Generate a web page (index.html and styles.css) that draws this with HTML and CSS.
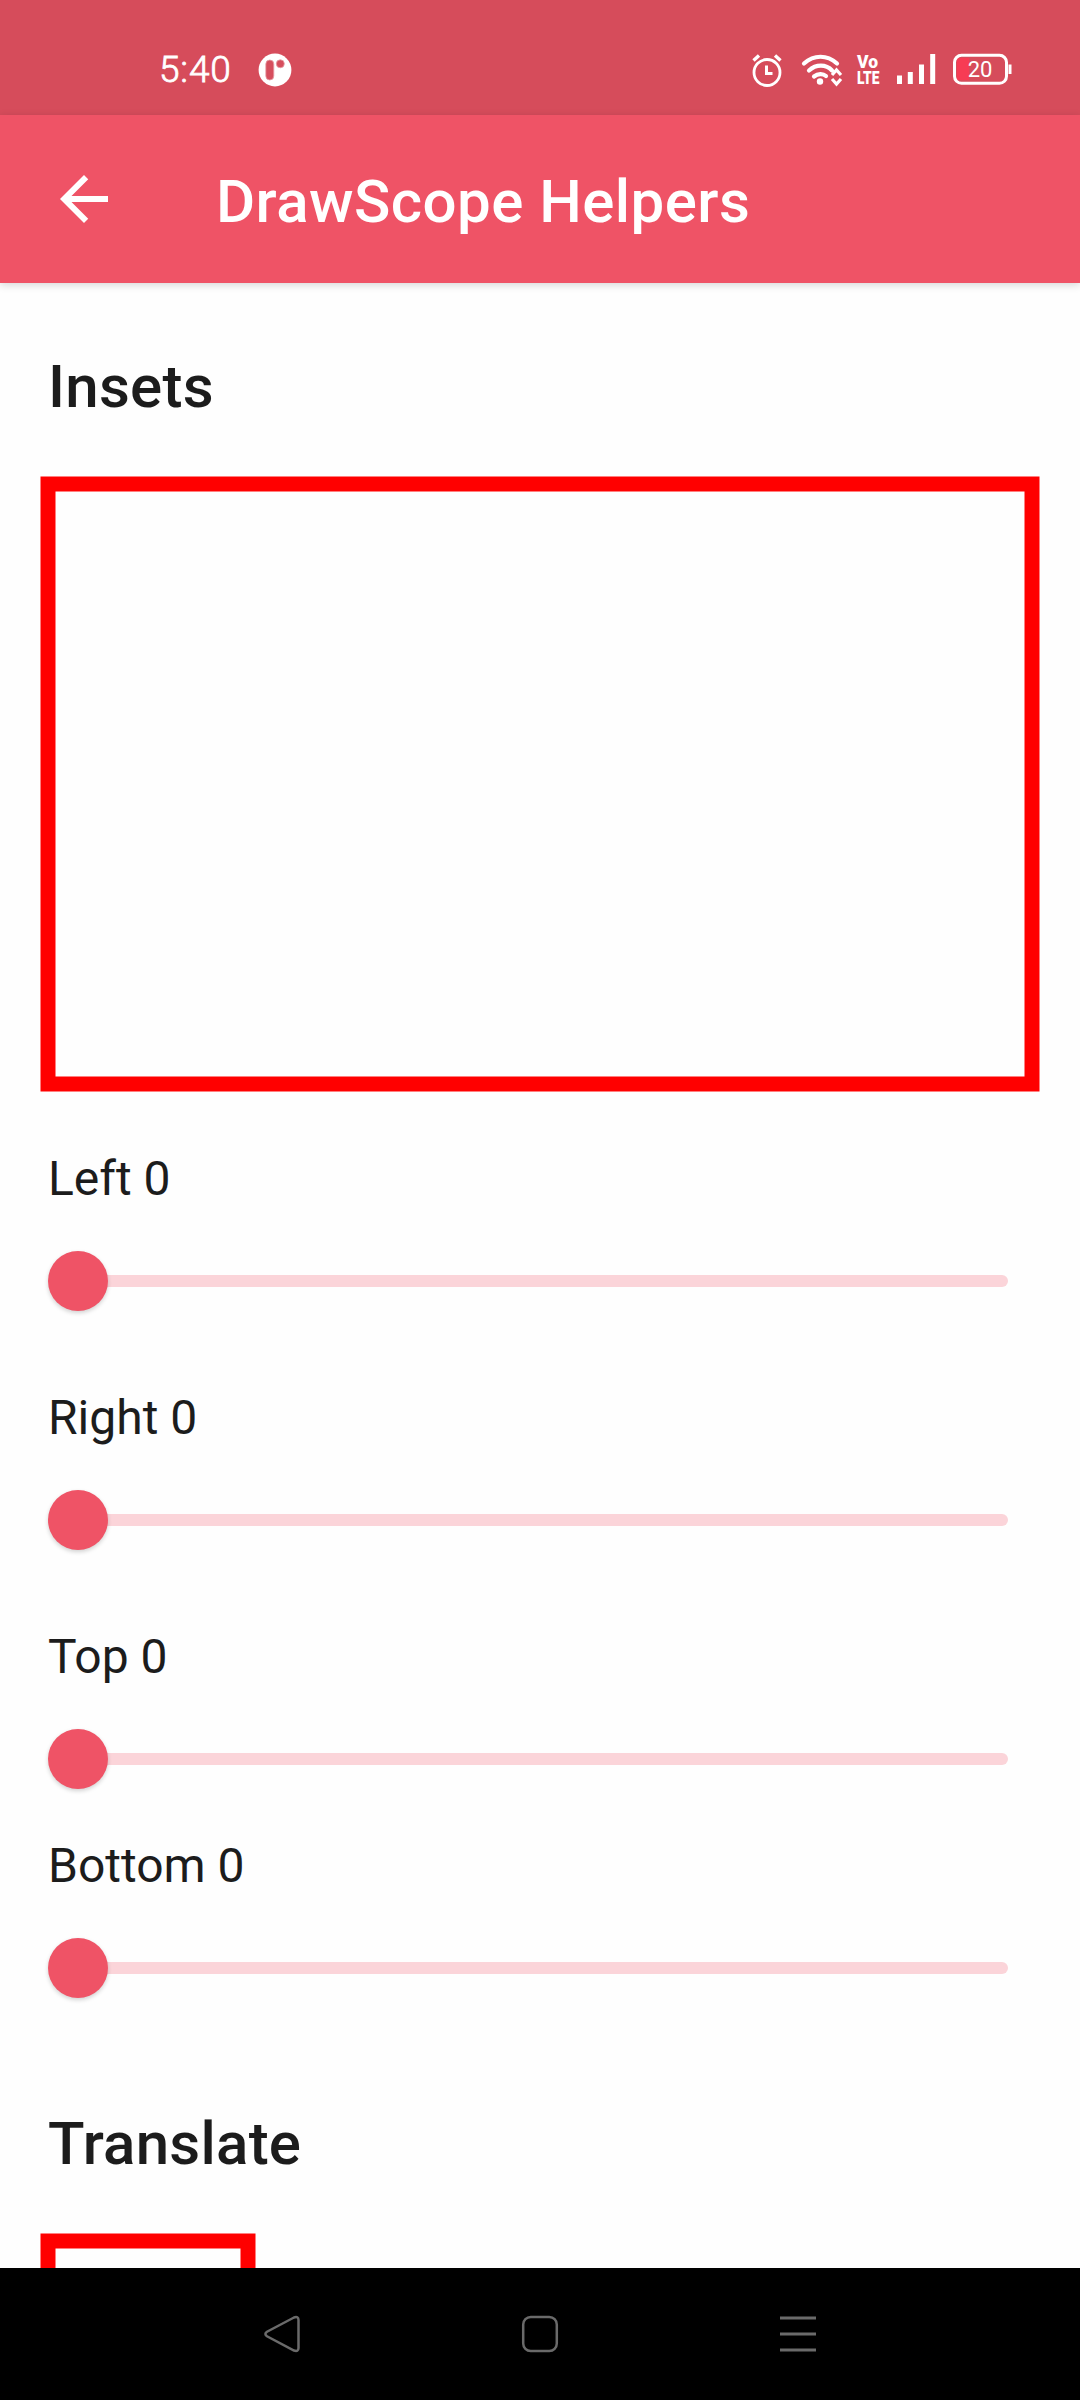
FILE: index.html
```
<!DOCTYPE html>
<html lang="en">
<head>
<meta charset="utf-8">
<title>DrawScope Helpers</title>
<link rel="stylesheet" href="styles.css">
</head>
<body>
<div class="screen">
  <header class="status-bar">
    <span class="clock">5:40</span>
    <svg class="notification" width="34" height="34" viewBox="0 0 34 34">
      <circle cx="17" cy="17" r="16.4" fill="#fff"/>
      <rect x="7.8" y="7" width="8" height="20" rx="4" fill="#d64e5d" stroke="#e9a0a8" stroke-width=".8"/>
      <circle cx="22.3" cy="10.8" r="4" fill="#d64e5d" stroke="#e9a0a8" stroke-width=".8"/>
    </svg>
    <div class="indicators">
      <svg width="280" height="40" viewBox="0 0 280 40" fill="none" stroke="#fff">
        <g stroke-width="2.8">
          <circle cx="17" cy="22.5" r="13"/>
          <path d="M3.5 10.5 9 5.5M30.5 10.5 25 5.5" stroke-width="3.4"/>
          <path d="M16.5 15.5V23.5H22.5" stroke-width="3"/>
        </g>
        <g stroke-width="4.2" stroke-linecap="round">
          <path d="M54 13.5C64 4.5 77 4.5 87 13.5M59 20.5C66 14 76 14 82 20.5M64 26.5C68 23.3 73 23.3 76 26"/>
        </g>
        <circle cx="70" cy="31.5" r="3.2" fill="#fff" stroke="none"/>
        <path d="M82 25 86.5 20 91 25M82 29 86.5 34 91 29" stroke-width="3.2"/>
        <g class="volte" fill="#fff" stroke="none">
          <text x="107" y="18" textLength="21" lengthAdjust="spacingAndGlyphs">Vo</text>
          <text x="107" y="34" textLength="22.5" lengthAdjust="spacingAndGlyphs">LTE</text>
        </g>
        <path d="M149.5 34V25.5M160.3 34V22M171.5 34V14.5M182.7 34V4" stroke-width="5"/>
        <rect x="207" y="8" width="12" height="22" fill="#f73c54" stroke="none"/>
        <rect x="204.5" y="5.3" width="52" height="28" rx="7" stroke-width="3"/>
        <path d="M260 14.5V24" stroke-width="3"/>
        <text class="battery-level" x="230" y="26.5" text-anchor="middle">20</text>
      </svg>
    </div>
  </header>

  <nav class="app-bar">
    <svg class="back" width="72" height="72" viewBox="0 0 24 24" fill="#fff"><path d="M20 11H7.830l5.590-5.590L12 4l-8 8 8 8 1.410-1.410L7.830 13H20v-2z"/></svg>
    <h1 class="title">DrawScope Helpers</h1>
  </nav>

  <main class="content">
    <h2 class="heading">Insets</h2>
    <svg class="canvas" width="1000" height="616" viewBox="0 0 1000 616">
      <rect x="8" y="8" width="984" height="600" fill="none" stroke="#f00" stroke-width="15"/>
    </svg>
    <section class="control">
      <span class="label">Left 0</span>
      <div class="slider"><div class="thumb"></div></div>
    </section>
    <section class="control">
      <span class="label">Right 0</span>
      <div class="slider"><div class="thumb"></div></div>
    </section>
    <section class="control control-compact">
      <span class="label">Top 0</span>
      <div class="slider"><div class="thumb"></div></div>
    </section>
    <section class="control">
      <span class="label">Bottom 0</span>
      <div class="slider"><div class="thumb"></div></div>
    </section>
    <h2 class="heading heading-translate">Translate</h2>
    <svg class="canvas" width="216" height="216" viewBox="0 0 216 216">
      <rect x="8" y="8" width="200" height="200" fill="none" stroke="#f00" stroke-width="15"/>
    </svg>
  </main>

  <footer class="nav-bar">
    <svg width="38" height="40" viewBox="0 0 38 40"><path d="M31 3.5 4 17.7Q.8 20 4 22.3L31 36.5Q35.5 38 35.5 34V6Q35.5 2 31 3.5Z"/></svg>
    <svg width="38" height="40" viewBox="0 0 38 40"><rect x="2.2" y="3" width="33.6" height="34" rx="7.5"/></svg>
    <svg width="38" height="40" viewBox="0 0 38 40"><path d="M1 4H37M1 20H37M1 36H37" stroke-width="3"/></svg>
  </footer>
</div>
</body>
</html>
```
FILE: styles.css
```
* { box-sizing: border-box; }

body {
  margin: 0;
  font-family: Roboto, "Liberation Sans", sans-serif;
  background: #fefefe;
  color: #1c1c1c;
}

.screen {
  display: flex;
  flex-direction: column;
  width: 1080px;
  height: 2400px;
  overflow: hidden;
}

.status-bar {
  flex: none;
  display: flex;
  align-items: center;
  height: 115px;
  padding: 24px 61px 0 159px;
  background: #d64c5b;
  color: #fff;
}

.clock {
  width: 99px;
  padding-top: 1px;
  font-size: 37px;
  font-weight: 300;
  line-height: 44px;
  letter-spacing: .8px;
  -webkit-text-stroke: .8px #fff;
}

.indicators {
  display: flex;
  margin-left: auto;
}

.indicators svg { margin-right: -11px; }

.volte {
  font-size: 18px;
  font-weight: 900;
}

.battery-level {
  fill: #fff;
  stroke: none;
  font-size: 22px;
  font-weight: 400;
}

.app-bar {
  position: relative;
  flex: none;
  display: flex;
  align-items: center;
  gap: 96px;
  height: 168px;
  padding: 0 48px;
  background: #ef5366;
  color: #fff;
  box-shadow: 0 2px 8px rgba(0, 0, 0, .16);
}

.title,
.heading {
  margin: 0;
  font-size: 60px;
  font-weight: 500;
  line-height: 72px;
  letter-spacing: .25px;
}

.title {
  padding-top: 6px;
  letter-spacing: .45px;
}

.content {
  flex: 1;
  display: flex;
  flex-direction: column;
  min-height: 0;
  padding: 68px 40px 0;
  overflow: hidden;
}

.heading {
  flex: none;
  margin-left: 8px;
  margin-bottom: 53px;
}

.heading-translate { margin-top: 90px; }

.canvas {
  flex: none;
  display: block;
}

.control {
  flex: none;
  height: 239px;
  padding: 58px 32px 0 8px;
}

.control-compact { height: 209px; }

.label {
  display: block;
  font-size: 48px;
  line-height: 58px;
}

.slider {
  position: relative;
  display: flex;
  align-items: center;
  height: 60px;
  margin-top: 43px;
}

.slider::before {
  content: "";
  flex: 1;
  height: 12px;
  margin-left: 24px;
  border-radius: 6px;
  background: #fbd4d9;
}

.thumb {
  position: absolute;
  left: 0;
  top: 0;
  width: 60px;
  height: 60px;
  border-radius: 50%;
  background: #ef5366;
  box-shadow: 0 2px 4px rgba(0, 0, 0, .18);
}

.nav-bar {
  flex: none;
  display: flex;
  align-items: center;
  justify-content: space-between;
  height: 132px;
  padding: 0 263px;
  background: #000;
}

.nav-bar svg {
  fill: none;
  stroke: #6a6a6a;
  stroke-width: 2.5px;
}
```
